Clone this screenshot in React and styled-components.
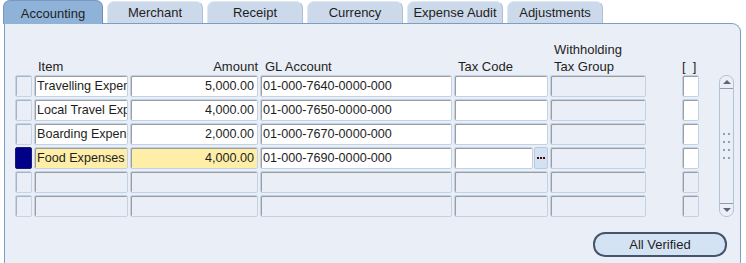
import styled, { createGlobalStyle } from "styled-components";

const GlobalStyle = createGlobalStyle`
  body {
    margin: 0;
    background: #ffffff;
    font-family: "Liberation Sans", Arial, sans-serif;
    font-size: 13px;
    color: #1e1e1e;
  }
`;

const tabs = ["Accounting", "Merchant", "Receipt", "Currency", "Expense Audit", "Adjustments"];

const rows = [
  { item: "Travelling Expenses", amount: "5,000.00", gl: "01-000-7640-0000-000" },
  { item: "Local Travel Expenses", amount: "4,000.00", gl: "01-000-7650-0000-000" },
  { item: "Boarding Expenses", amount: "2,000.00", gl: "01-000-7670-0000-000" },
  { item: "Food Expenses", amount: "4,000.00", gl: "01-000-7690-0000-000", current: true },
  { empty: true },
  { empty: true },
];

export default function App() {
  return (
    <Screen>
      <GlobalStyle />
      <TabBar>
        {tabs.map((t, i) => (
          <Tab key={t} $active={i === 0}>{t}</Tab>
        ))}
      </TabBar>
      <Panel>
        <Body>
          <Table>
            <Grid>
              <Head $col={2}>Item</Head>
              <Head $col={3} $right>Amount</Head>
              <Head $col={4} $pad={5}>GL Account</Head>
              <Head $col={5}>Tax Code</Head>
              <Head $col={6}>Withholding<br />Tax Group</Head>
              <Head $col={8} $pad={0}>[&nbsp;&nbsp;]</Head>
            </Grid>
            <Grid $rows>
              {rows.map((r, i) => (
                <Row key={i} r={r} />
              ))}
            </Grid>
          </Table>
          <Scrollbar>
            <ScrollEnd>
              <Arrow />
            </ScrollEnd>
            <Grip>
              <span /><span /><span /><span /><span /><span /><span /><span />
            </Grip>
            <ScrollEnd $bottom>
              <Arrow $down />
            </ScrollEnd>
          </Scrollbar>
        </Body>
        <Footer>
          <Button>All Verified</Button>
        </Footer>
      </Panel>
    </Screen>
  );
}

function Row({ r }) {
  if (r.empty) {
    return (
      <>
        <Indicator />
        <Field $off />
        <Field $off />
        <Field $off />
        <Field $off />
        <Field $off />
        <span />
        <Field $off />
      </>
    );
  }
  return (
    <>
      <Indicator $current={r.current} />
      <Field $hi={r.current}>{r.item}</Field>
      <Field $hi={r.current} $right>{r.amount}</Field>
      <Field>{r.gl}</Field>
      {r.current ? (
        <LovCell>
          <Field />
          <LovButton>
            <i /><i /><i />
          </LovButton>
        </LovCell>
      ) : (
        <Field />
      )}
      <Field $off />
      <span />
      <Field />
    </>
  );
}

const Screen = styled.div`
  width: 746px;
  height: 263px;
  overflow: hidden;
`;

const TabBar = styled.div`
  display: flex;
  gap: 4px;
  padding-left: 3px;
  height: 23px;
  position: relative;
  z-index: 1;
`;

const Tab = styled.div`
  width: ${(p) => (p.$active ? 100 : 96)}px;
  height: ${(p) => (p.$active ? 24 : 22)}px;
  margin-top: ${(p) => (p.$active ? 0 : 1)}px;
  box-sizing: border-box;
  display: flex;
  align-items: center;
  justify-content: center;
  padding-top: ${(p) => (p.$active ? 1 : 0)}px;
  background: ${(p) => (p.$active ? "#8fb3d8" : "#cbd9ea")};
  border: 1px solid ${(p) => (p.$active ? "#7898c0" : "#dfe7f1")};
  border-right-color: ${(p) => (p.$active ? "#6f8fb8" : "#aebfd4")};
  border-bottom: none;
  border-radius: 7px 7px 0 0;
  color: #1e1e1e;
  font-size: 13px;
`;

const Panel = styled.div`
  margin-left: 4px;
  width: 737px;
  height: 250px;
  box-sizing: border-box;
  background: #eaeef6;
  border-top: 1px solid #7d9dc3;
  border-left: 1px solid #7d9dc3;
  border-right: 1px solid #7d9dc3;
  border-top-right-radius: 9px;
  padding: 17px 0 0 10px;
`;

const Body = styled.div`
  display: flex;
  align-items: flex-end;
  gap: 20px;
`;

const Table = styled.div`
  display: flex;
  flex-direction: column;
`;

const Grid = styled.div`
  display: grid;
  grid-template-columns: 17px 94px 128px 192px 94px 96px 32px 17px;
  column-gap: 2px;
  row-gap: 2px;
  grid-auto-rows: ${(p) => (p.$rows ? "22px" : "auto")};
`;

const Head = styled.div`
  grid-column: ${(p) => p.$col};
  align-self: end;
  line-height: 17px;
  padding-left: ${(p) => (p.$pad ?? 4)}px;
  text-align: ${(p) => (p.$right ? "right" : "left")};
  white-space: nowrap;
  color: #1e1e1e;
`;

const Indicator = styled.div`
  box-sizing: border-box;
  border: 1px solid ${(p) => (p.$current ? "#1a1a70" : "#c4d3e6")};
  box-shadow: ${(p) => (p.$current ? "none" : "inset 1px 1px 0 #a9b4c2")};
  background: ${(p) => (p.$current ? "#000088" : "#eaeef6")};
  border-radius: 2px;
`;

const Field = styled.div`
  box-sizing: border-box;
  min-width: 0;
  height: 22px;
  line-height: 20px;
  padding: 0 3px 0 2px;
  overflow: hidden;
  white-space: nowrap;
  font-size: 12.6px;
  text-align: ${(p) => (p.$right ? "right" : "left")};
  background: ${(p) => (p.$hi ? "#ffeea8" : p.$off ? "#eaeef6" : "#ffffff")};
  border: 1px solid #c2d2e6;
  box-shadow: inset 1px 1px 0 #9d9d9d;
  border-radius: 2px;
  color: #1e1e1e;
`;

const LovCell = styled.div`
  display: flex;
  gap: 1px;
  & > ${Field} {
    flex: 1;
  }
`;

const LovButton = styled.div`
  width: 14px;
  height: 22px;
  box-sizing: border-box;
  background: #d3e2f2;
  border: 1px solid #b9cbe0;
  border-radius: 2px;
  display: flex;
  align-items: center;
  justify-content: center;
  gap: 1px;
  i {
    width: 2px;
    height: 2px;
    background: #4a0000;
  }
`;

const Scrollbar = styled.div`
  width: 15px;
  height: 142px;
  box-sizing: border-box;
  border: 1px solid #b3c3d8;
  border-radius: 7px;
  display: flex;
  flex-direction: column;
  justify-content: space-between;
`;

const ScrollEnd = styled.div`
  height: 12px;
  display: flex;
  align-items: center;
  justify-content: center;
  border-bottom: ${(p) => (p.$bottom ? "none" : "1px solid #8e9bb0")};
  border-top: ${(p) => (p.$bottom ? "1px solid #8e9bb0" : "none")};
`;

const Arrow = styled.div`
  width: 0;
  height: 0;
  border-left: 4px solid transparent;
  border-right: 4px solid transparent;
  ${(p) =>
    p.$down
      ? "border-top: 4px solid #5d6677;"
      : "border-bottom: 4px solid #5d6677;"}
`;

const Grip = styled.div`
  display: grid;
  grid-template-columns: 2px 2px;
  column-gap: 3px;
  row-gap: 6px;
  justify-content: center;
  span {
    width: 2px;
    height: 2px;
    background: #8f9fb8;
  }
`;

const Footer = styled.div`
  display: flex;
  justify-content: flex-end;
  padding: 15px 13px 0 0;
`;

const Button = styled.button`
  width: 134px;
  height: 25px;
  box-sizing: border-box;
  background: #d4e3f3;
  border: 2px solid #44546a;
  border-radius: 12px;
  font-family: "Liberation Sans", Arial, sans-serif;
  font-size: 13px;
  color: #1e1e1e;
  padding: 0;
`;
